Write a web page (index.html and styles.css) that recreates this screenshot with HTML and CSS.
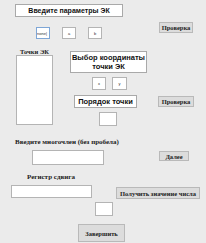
FILE: index.html
```html
<!DOCTYPE html>
<html lang="ru">
<head>
    <meta charset="UTF-8">
    <title>Параметры ЭК</title>
    <link rel="stylesheet" href="styles.css">
</head>
<body>

<div class="form">
    <div class="row row-title">
        <div class="caption caption-main">Введите параметры ЭК</div>
    </div>

    <div class="row row-params">
        <input type="text" class="field field-p focused" value="none|">
        <input type="text" class="field field-p gap-a" value="a">
        <input type="text" class="field field-p gap-a" value="b">
        <button class="btn btn-check1">Проверка</button>
    </div>

    <div class="row row-points">
        <div class="points-col">
            <div class="points-label">Точки ЭК</div>
            <div class="listbox"></div>
        </div>
        <div class="coord-col">
            <div class="caption caption-coord">Выбор координаты<br>точки ЭК</div>
            <div class="xy-row">
                <input type="text" class="field field-x" value="x">
                <input type="text" class="field field-y" value="y">
            </div>
            <div class="caption caption-order">Порядок точки</div>
            <input type="text" class="field field-order">
        </div>
        <button class="btn btn-check2">Проверка</button>
    </div>

    <div class="label label-poly">Введите многочлен (без пробела)</div>
    <div class="row row-poly">
        <input type="text" class="field field-poly">
        <button class="btn btn-next">Далее</button>
    </div>

    <div class="label label-reg">Регистр сдвига</div>
    <div class="row row-reg">
        <input type="text" class="field field-reg">
        <button class="btn btn-value">Получить значение числа</button>
    </div>

    <div class="row row-result">
        <input type="text" class="field field-result">
    </div>

    <div class="row row-finish">
        <button class="btn btn-finish">Завершить</button>
    </div>
</div>

</body>
</html>
```

FILE: styles.css
```css
/* WinForms-like dialog, scaled down */
* {
    box-sizing: border-box;
}
body {
    margin: 0;
    background-color: #ebebeb;
    font-family: "Liberation Serif", serif;
    color: #222;
}
.form {
    width: 206px;
    height: 243px;
    overflow: hidden;
}
.row {
    display: flex;
    align-items: flex-start;
}

/* captions with a sunken white frame */
.caption {
    background-color: #fff;
    border: 1px solid #a9a9a9;
    font-family: "Liberation Sans", sans-serif;
    font-weight: bold;
    font-size: 7px;
    color: #111;
    text-align: center;
}
.row-title {
    margin-top: 4px;
    padding-left: 15px;
}
.caption-main {
    width: 108px;
    height: 13px;
    line-height: 11px;
}

/* text fields */
.field {
    display: block;
    margin: 0;
    padding: 0;
    background-color: #fff;
    border: 1px solid #b4b4b4;
    border-radius: 0;
    font-family: "Liberation Sans", sans-serif;
    font-size: 4px;
    color: #333;
    text-align: center;
    outline: none;
}
.focused {
    border-color: #7ea6d6;
    text-align: left;
}

/* buttons */
.btn {
    display: block;
    margin: 0;
    padding: 0;
    background-color: #dcdcdc;
    border: 1px solid #b9b9b9;
    border-radius: 0;
    font-family: "Liberation Serif", serif;
    font-weight: bold;
    font-size: 6.5px;
    color: #222;
    white-space: nowrap;
    text-align: center;
}

.row-params {
    margin-top: 5px;
    padding-left: 36px;
    height: 17px;
}
.field-p {
    width: 14px;
    height: 12px;
    margin-top: 5px;
}
.gap-a {
    margin-left: 12px;
}
.btn-check1 {
    width: 34px;
    height: 11px;
    margin-left: 57px;
}

/* points block */
.row-points {
    margin-top: 9px;
    padding-left: 16px;
}
.points-col {
    width: 37px;
}
.points-label {
    height: 7px;
    line-height: 7px;
    font-weight: bold;
    font-size: 6.5px;
    text-align: center;
}
.listbox {
    height: 70px;
    background-color: #fff;
    border: 1px solid #b4b4b4;
}
.coord-col {
    width: 77px;
    margin-left: 17px;
    margin-top: 3px;
}
.caption-coord {
    height: 22px;
    line-height: 9px;
    padding-top: 1px;
    font-size: 7.5px;
}
.xy-row {
    display: flex;
    margin-top: 4px;
    padding-left: 22px;
}
.field-x {
    width: 14px;
    height: 13px;
}
.field-y {
    width: 15px;
    height: 13px;
    margin-left: 6px;
}
.caption-order {
    width: 63px;
    height: 13px;
    line-height: 11px;
    margin-top: 5px;
    margin-left: 4px;
    font-size: 7.5px;
}
.field-order {
    width: 18px;
    height: 14px;
    margin-top: 4px;
    margin-left: 29px;
}
.btn-check2 {
    width: 36px;
    height: 11px;
    margin-left: 11px;
    margin-top: 48px;
}

/* polynomial */
.label {
    font-weight: bold;
    font-size: 7px;
    line-height: 7px;
    height: 7px;
    white-space: nowrap;
}
.label-poly {
    margin-top: 13px;
    padding-left: 15px;
}
.row-poly {
    margin-top: 4px;
    padding-left: 32px;
}
.field-poly {
    width: 72px;
    height: 15px;
}
.btn-next {
    width: 30px;
    height: 10px;
    margin-left: 55px;
    margin-top: 1px;
}

/* shift register */
.label-reg {
    margin-top: 9px;
    padding-left: 27px;
}
.row-reg {
    margin-top: 4px;
    padding-left: 11px;
}
.field-reg {
    width: 81px;
    height: 13px;
}
.btn-value {
    width: 84px;
    height: 12px;
    margin-left: 24px;
    margin-top: 2px;
}
.row-result {
    margin-top: 3px;
    padding-left: 95px;
}
.field-result {
    width: 18px;
    height: 14px;
}
.row-finish {
    margin-top: 8px;
    padding-left: 78px;
}
.btn-finish {
    width: 47px;
    height: 18px;
}
```
